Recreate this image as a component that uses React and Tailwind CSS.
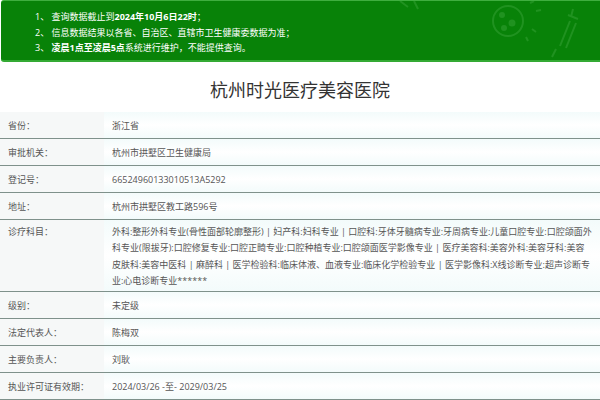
import React from 'react';

const rows = [
  { label: '省份：', value: '浙江省' },
  { label: '审批机关：', value: '杭州市拱墅区卫生健康局' },
  { label: '登记号：', value: '66524960133010513A5292' },
  { label: '地址：', value: '杭州市拱墅区教工路596号' },
  {
    label: '诊疗科目：',
    lines: [
      '外科:整形外科专业(骨性面部轮廓整形) | 妇产科:妇科专业 | 口腔科:牙体牙髓病专业:牙周病专业:儿童口腔专业:口腔颌面外',
      '科专业(限拔牙):口腔修复专业:口腔正畸专业:口腔种植专业:口腔颌面医学影像专业 | 医疗美容科:美容外科:美容牙科:美容',
      '皮肤科:美容中医科 | 麻醉科 | 医学检验科:临床体液、血液专业:临床化学检验专业 | 医学影像科:X线诊断专业:超声诊断专',
      '业:心电诊断专业******'
    ]
  },
  { label: '级别：', value: '未定级' },
  { label: '法定代表人：', value: '陈梅双' },
  { label: '主要负责人：', value: '刘耿' },
  { label: '执业许可证有效期：', value: '2024/03/26 -至- 2029/03/25' }
];

function Watermark() {
  return (
    <svg className="absolute right-0 top-0 opacity-20" width="220" height="60" viewBox="0 0 220 60" fill="none" stroke="#7fd27f" strokeWidth="2">
      <path d="M20 0 l8 6 M34 0 l4 8" />
      <circle cx="128" cy="20" r="15" />
      <circle cx="122" cy="14" r="2" fill="#7fd27f" />
      <circle cx="132" cy="22" r="2.5" fill="#7fd27f" />
      <circle cx="124" cy="27" r="2" fill="#7fd27f" />
      <path d="M150 2 l4 -2 M156 10 l5 -1 M152 28 l4 3 M146 36 l2 4" />
      <path d="M190 20 l-10 25 M196 22 l-10 25 M188 14 l10 4 M193 8 l-2 8" />
      <path d="M176 48 l-4 8" />
    </svg>
  );
}

export default function App() {
  return (
    <div className="w-[600px] h-[400px] overflow-hidden bg-white text-[9px] text-[#555]" style={{ fontFamily: '"Open Sans", "Noto Sans CJK SC", sans-serif' }}>
      <div className="relative ml-[1px] h-[62px] rounded-l-[3px] bg-[#088208] border-t border-b-2 border-t-[#3fae3f] border-b-[#34aa34] pl-[34px] pt-[8px] leading-[15.5px] text-white">
        <Watermark />
        <p className="relative">1、 查询数据截止到<b>2024年10月6日22时</b>；</p>
        <p className="relative">2、 信息数据结果以各省、自治区、直辖市卫生健康委数据为准；</p>
        <p className="relative">3、 <b>凌晨1点至凌晨5点</b>系统进行维护，不能提供查询。</p>
      </div>

      <h1 className="h-[50px] flex items-center justify-center text-[18px] text-[#333] pt-[7px]">杭州时光医疗美容医院</h1>

      <div>
        {rows.map((r) => (
          <div key={r.label} className={`flex border-b border-[#7f918b] ${r.lines ? '' : 'h-[27px]'}`}>
            <div className={`w-[104px] shrink-0 bg-[#f6f8f8] pl-[8px] ${r.lines ? 'pt-[4px] leading-[16.3px]' : 'flex items-center pt-[2px]'}`}>
              {r.label}
            </div>
            <div className={`flex-1 bg-linear-to-b from-[#f3fbfb] via-white to-[#f3fbfb] pl-[8px] ${r.lines ? 'pt-[4px] pb-[2px] leading-[16.3px]' : 'flex items-center pt-[2px]'}`}>
              {r.lines ? r.lines.map((l) => <div key={l} className="whitespace-nowrap">{l}</div>) : r.value}
            </div>
          </div>
        ))}
      </div>
    </div>
  );
}
